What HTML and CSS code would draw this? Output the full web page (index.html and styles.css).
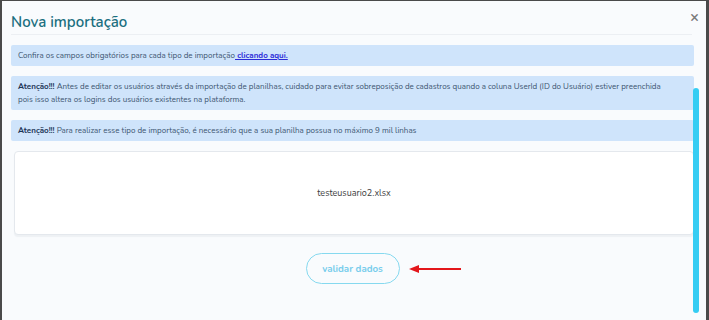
FILE: index.html
```html
<!DOCTYPE html>
<html lang="pt-BR">
<head>
<meta charset="utf-8">
<title>Nova importação</title>
<link rel="stylesheet" href="styles.css">
</head>
<body>
<div class="frame">
  <div class="modal">
    <div class="modal-header">
      <h1 class="title">Nova importação</h1>
      <span class="close">&times;</span>
    </div>
    <div class="modal-body">
      <div class="alert">Confira os campos obrigatórios para cada tipo de importação<a class="link" href="#"> clicando aqui.</a></div>
      <div class="alert alert-wide"><b>Atenção!!!</b> Antes de editar os usuários através da importação de planilhas, cuidado para evitar sobreposição de cadastros quando a coluna UserId (ID do Usuário) estiver preenchida pois isso altera os logins dos usuários existentes na plataforma.</div>
      <div class="alert"><b>Atenção!!!</b> Para realizar esse tipo de importação, é necessário que a sua planilha possua no máximo 9 mil linhas</div>
      <div class="file-box">testeusuario2.xlsx</div>
      <div class="actions">
        <button class="btn">validar dados</button>
        <svg class="arrow" width="54" height="10" viewBox="0 0 54 10"><line x1="8" y1="5" x2="52" y2="5" stroke="#e3161b" stroke-width="2"/><polygon points="0,5 10,1 10,9" fill="#e3161b"/></svg>
      </div>
    </div>
    <div class="scrollbar"></div>
  </div>
</div>
</body>
</html>
```
FILE: styles.css
```css
html, body {
  margin: 0;
  padding: 0;
  background: #ffffff;
}
.frame {
  width: 709px;
  height: 320px;
  box-sizing: border-box;
  border-left: 2px solid #4a4a4a;
  border-right: 3px solid #4a4a4a;
  border-top: 1px solid #4a4a4a;
  background: #f9fbfd;
  overflow: hidden;
}
.modal {
  position: relative;
  height: 100%;
  font-family: "Nunito", "Lato", "Noto Sans", sans-serif;
}
.modal-header {
  display: flex;
  align-items: center;
  justify-content: space-between;
  margin: 0 14px 0 9px;
  height: 33px;
  border-bottom: 1px solid #eceff3;
}
.title {
  margin: 0;
  font-size: 15px;
  font-weight: 600;
  color: #1b6f80;
  padding-top: 9px;
}
.close {
  font-size: 15px;
  font-weight: 700;
  color: #7a7a7a;
  line-height: 1;
  margin-right: -7px;
  margin-top: -1px;
}
.modal-body {
  padding: 10px 12px 0 9px;
  display: flex;
  flex-direction: column;
  gap: 10px;
}
.alert {
  background: #cfe4fb;
  color: #3c5570;
  font-size: 8px;
  line-height: 13px;
  padding: 4px 7px;
  border-radius: 2px;
}
.alert-wide {
  padding-right: 24px;
}
.alert b {
  color: #1d3557;
  font-weight: 700;
}
.link {
  color: #2b2bd8;
  font-weight: 700;
  text-decoration: underline;
}
.file-box {
  margin: 0 0 0 3px;
  height: 82px;
  background: #ffffff;
  border: 1px solid #e4e8ed;
  border-radius: 4px;
  display: flex;
  align-items: center;
  justify-content: center;
  font-size: 9px;
  color: #404040;
  box-shadow: 0 2px 1px #eef1f4;
}
.actions {
  position: relative;
  display: flex;
  justify-content: center;
  padding-top: 8px;
}
.btn {
  width: 94px;
  height: 31px;
  border: 1px solid #86d9ef;
  border-radius: 16px;
  background: transparent;
  color: #78cdec;
  font-family: inherit;
  font-size: 9.7px;
  font-weight: 700;
}
.arrow {
  position: absolute;
  left: 398px;
  top: 19px;
}
.scrollbar {
  position: absolute;
  left: 691px;
  top: 87px;
  width: 6px;
  height: 225px;
  background: #36cdf3;
  border-radius: 3px;
}
```
